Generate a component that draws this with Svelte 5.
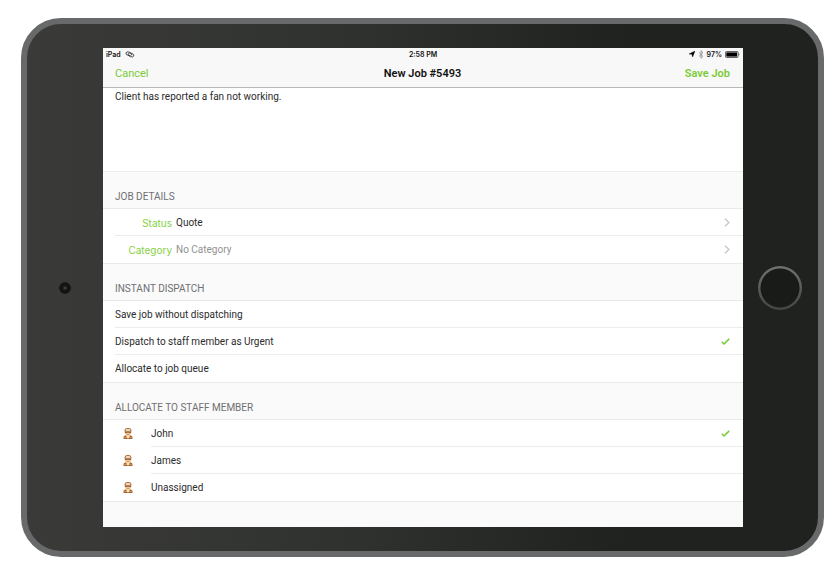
<script>
  let notes = $state("Client has reported a fan not working.");
  let dispatch = $state("urgent");
  let staff = $state("John");

  const details = [
    { label: "Status", value: "Quote", empty: false },
    { label: "Category", value: "No Category", empty: true },
  ];

  const dispatchOptions = [
    { id: "save", label: "Save job without dispatching" },
    { id: "urgent", label: "Dispatch to staff member as Urgent" },
    { id: "queue", label: "Allocate to job queue" },
  ];

  const staffMembers = ["John", "James", "Unassigned"];
</script>

{#snippet check()}
  <svg class="check" viewBox="0 0 9 8" aria-hidden="true">
    <path d="M0.8 3.7 L3.1 6 L8.2 0.9" />
  </svg>
{/snippet}

<main class="device">
  <div class="side left">
    <span class="camera"></span>
  </div>

  <div class="screen">
    <header>
      <div class="statusbar">
        <div class="carrier">
          <span>iPad</span>
          <svg class="link" viewBox="0 0 10 7" aria-hidden="true">
            <ellipse cx="3.8" cy="2.8" rx="3" ry="1.7" transform="rotate(18 3.8 2.8)" />
            <ellipse cx="6" cy="4" rx="3" ry="1.7" transform="rotate(18 6 4)" />
          </svg>
        </div>
        <time>2:58 PM</time>
        <div class="indicators">
          <svg class="location" viewBox="0 0 6 6" aria-hidden="true">
            <path d="M6 0 L3.6 6 L2.9 3.3 L0 3 Z" stroke="#000" stroke-width="0.4" />
          </svg>
          <svg class="bluetooth" viewBox="0 0 6 9" aria-hidden="true">
            <path d="M1 2.5 L5 6.4 L3 8.3 V0.7 L5 2.6 L1 6.5" />
          </svg>
          <span>97%</span>
          <svg class="battery" viewBox="0 0 15 7" aria-hidden="true">
            <rect x="0.4" y="0.5" width="12.8" height="6" rx="1.2" fill="none" stroke="#222" stroke-width="0.7" />
            <rect x="1.3" y="1.4" width="10.8" height="4.2" fill="#000" />
            <path d="M13.9 2.4 Q15 3.5 13.9 4.6 Z" fill="#111" />
          </svg>
        </div>
      </div>
      <nav>
        <button class="action cancel">Cancel</button>
        <h1>New Job #5493</h1>
        <button class="action save">Save Job</button>
      </nav>
    </header>

    <textarea class="notes" aria-label="Job description" bind:value={notes}></textarea>

    <section>
      <h2>Job Details</h2>
      <div class="list">
        {#each details as item}
          <button class="row">
            <span class="name">{item.label}</span>
            <span class="value" class:empty={item.empty}>{item.value}</span>
            <svg class="chevron" viewBox="0 0 6 9" aria-hidden="true">
              <path d="M1 0.8 L4.9 4.5 L1 8.2" />
            </svg>
          </button>
        {/each}
      </div>
    </section>

    <section>
      <h2>Instant Dispatch</h2>
      <div class="list">
        {#each dispatchOptions as option}
          <label class="row">
            <input type="radio" name="dispatch" value={option.id} bind:group={dispatch} />
            <span class="value">{option.label}</span>
            {#if dispatch === option.id}
              {@render check()}
            {/if}
          </label>
        {/each}
      </div>
    </section>

    <section>
      <h2>Allocate to Staff Member</h2>
      <div class="list people">
        {#each staffMembers as person}
          <label class="row">
            <input type="radio" name="staff" value={person} bind:group={staff} />
            <svg class="avatar" viewBox="0 0 10 11" aria-hidden="true">
              <path d="M0.5 11 V9 Q0.7 7.6 3 7.2 H7 Q9.3 7.6 9.5 9 V11 Z" fill="#a5622c" />
              <path d="M3 7 H7 L6.4 9.5 L5 10.8 L3.6 9.5 Z" fill="#fbe0b8" />
              <rect x="2" y="1.6" width="6" height="6" rx="2.4" fill="#f3c690" />
              <path d="M1.4 3.4 Q1.4 0 5 0 Q8.6 0 8.6 3.4 L7.4 2.7 H2.6 Z" fill="#a5672e" />
              <path d="M2.8 1.2 H7.2 V2.8 H2.8 Z" fill="#fbeedd" />
              <path d="M1.8 3.4 H8.2 V4.7 H5.8 L5 4.2 L4.2 4.7 H1.8 Z" fill="#75401c" />
              <path d="M3.8 6.1 H6.2 V6.7 H3.8 Z" fill="#b97742" />
              <path d="M1 9.6 H3 M7 9.6 H9" stroke="#e2ad70" stroke-width="0.7" />
            </svg>
            <span class="value">{person}</span>
            {#if staff === person}
              {@render check()}
            {/if}
          </label>
        {/each}
      </div>
    </section>
  </div>

  <div class="side right">
    <button class="home" aria-label="Home"></button>
  </div>
</main>

<style>
  :global(body) {
    background: #fff;
  }

  .device,
  .device * {
    box-sizing: border-box;
  }

  .device {
    display: flex;
    margin: 18px 13px 12px 21px;
    padding: 24px 0;
    border: 6px solid #67696a;
    border-radius: 40px;
    background: linear-gradient(90deg, #3a3b38, #30322f 40%, #20221f 75%);
    font-family: Roboto, "Liberation Sans", sans-serif;
    font-size: 10px;
    color: #2b2b2b;
  }

  .side {
    display: flex;
    flex: none;
    align-items: center;
  }

  .left {
    width: 76px;
    padding-left: 32px;
  }

  .right {
    width: 75px;
    padding-left: 15px;
  }

  .camera {
    width: 12px;
    height: 12px;
    border-radius: 50%;
    background: radial-gradient(circle, #4b514f 0, #171918 25%, #111211 50%, #292b29 100%);
  }

  .home {
    width: 44px;
    height: 44px;
    padding: 0;
    border: 0;
    border-radius: 50%;
    background: radial-gradient(circle, #191b18 19px, transparent 20px), linear-gradient(#727371, #434542);
  }

  .screen {
    display: flex;
    flex: 1;
    flex-direction: column;
    min-width: 0;
    padding-bottom: 25px;
    background: #fafafa;
  }

  header {
    border-bottom: 1px solid #b9b9b9;
    background: #f8f8f8;
  }

  .statusbar {
    display: grid;
    grid-template-columns: 1fr auto 1fr;
    align-items: center;
    height: 12px;
    padding: 0 3px;
    font-family: Inter, "Liberation Sans", sans-serif;
    font-size: 7px;
    font-weight: 600;
    color: #111;
  }

  .carrier,
  .indicators {
    display: flex;
    align-items: center;
    gap: 4px;
  }

  .indicators {
    justify-content: flex-end;
    gap: 3px;
  }

  .link {
    width: 10px;
    height: 7px;
    fill: none;
    stroke: #333;
    stroke-width: 0.8;
  }

  .location {
    width: 6px;
    height: 6px;
  }

  .bluetooth {
    width: 6px;
    height: 9px;
    fill: none;
    stroke: #888;
    stroke-width: 0.8;
  }

  .battery {
    width: 15px;
    height: 7px;
  }

  nav {
    display: grid;
    grid-template-columns: 1fr auto 1fr;
    align-items: center;
    height: 27px;
    padding: 0 13px 0 12px;
  }

  h1 {
    margin: 0;
    font-size: 11px;
    font-weight: 600;
    color: #111;
  }

  .action {
    padding: 0;
    border: 0;
    background: none;
    font: inherit;
    font-size: 11px;
    color: #7ccb36;
  }

  .cancel {
    justify-self: start;
  }

  .save {
    justify-self: end;
    font-weight: 600;
  }

  .notes {
    display: block;
    width: 100%;
    height: 84px;
    padding: 3px 12px;
    border: 0;
    border-bottom: 1px solid #ececec;
    outline: 0;
    background: #fff;
    font: inherit;
    line-height: 12px;
    color: inherit;
    resize: none;
  }

  h2 {
    display: flex;
    align-items: flex-end;
    height: 36px;
    margin: 0;
    padding: 0 12px 5px;
    font-size: 10px;
    font-weight: 400;
    line-height: 12px;
    text-transform: uppercase;
    color: #6f6f71;
  }

  .list {
    border-top: 1px solid #e9e9e9;
    border-bottom: 1px solid #e9e9e9;
    background: #fff;
  }

  .row {
    position: relative;
    display: flex;
    align-items: center;
    width: 100%;
    height: 27px;
    padding: 0 13px 0 12px;
    border: 0;
    background: linear-gradient(#ececec, #ececec) 12px 100% / 100% 1px no-repeat;
    font: inherit;
    text-align: left;
    color: inherit;
  }

  .people .row {
    padding-left: 20px;
    background-position: 48px 100%;
  }

  .row:last-child {
    background: none;
  }

  .row input {
    position: absolute;
    inset: 0;
    margin: 0;
    appearance: none;
  }

  .name {
    width: 57px;
    margin-right: 4px;
    font-family: Inter, "Liberation Sans", sans-serif;
    text-align: right;
    color: #86d044;
  }

  .value {
    flex: 1;
  }

  .empty {
    color: #929292;
  }

  .chevron {
    width: 6px;
    height: 9px;
    fill: none;
    stroke: #c4c4c8;
    stroke-width: 1.2;
  }

  .check {
    width: 9px;
    height: 8px;
    fill: none;
    stroke: #76cb32;
    stroke-width: 1.5;
  }

  .avatar {
    width: 10px;
    height: 11px;
    margin-right: 18px;
  }
</style>
